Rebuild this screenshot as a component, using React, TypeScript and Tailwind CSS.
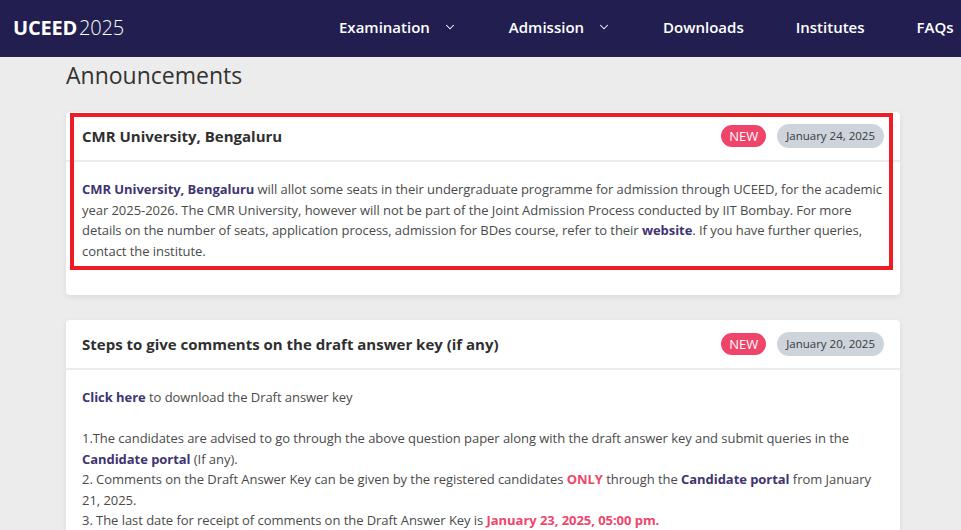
import { ChevronDown } from "lucide-react";

const font = { fontFamily: '"Open Sans", "Noto Sans", sans-serif' };

function NavItem({ label, dropdown }: { label: string; dropdown?: boolean }) {
  return (
    <div className="flex items-center gap-[13px] text-[15px] font-semibold text-white whitespace-nowrap">
      <span>{label}</span>
      {dropdown && <ChevronDown size={14} strokeWidth={1.75} />}
    </div>
  );
}

function Badges({ date }: { date: string }) {
  return (
    <div className="flex items-center gap-[11px]">
      <span className="h-[22px] px-[8px] rounded-full bg-[#f0456b] text-white text-[13px] leading-[22px]">NEW</span>
      <span className="h-[24px] px-[9px] rounded-full bg-[#cdd4dc] text-[#3a3a3a] text-[11.5px] leading-[24px]">{date}</span>
    </div>
  );
}

function Card({ title, date, children }: { title: string; date: string; children: React.ReactNode }) {
  return (
    <div className="bg-white rounded-[4px] shadow-[0_2px_6px_rgba(0,0,0,0.08)]">
      <div className="flex items-center justify-between h-[50px] px-[16px] border-b-2 border-[#ececec]">
        <h3 className="text-[15px] font-bold text-[#2f2f2f]">{title}</h3>
        <Badges date={date} />
      </div>
      <div className="px-[16px] pt-[17px] pb-[34px] text-[13px] tracking-[-0.05px] leading-[20.5px] text-[#4a4a4a]">
        {children}
      </div>
    </div>
  );
}

const B = ({ children }: { children: React.ReactNode }) => (
  <b className="font-bold text-[#3f3470]">{children}</b>
);
const P = ({ children }: { children: React.ReactNode }) => (
  <b className="font-bold text-[#f0456b]">{children}</b>
);

export default function App() {
  return (
    <div className="min-h-[530px] bg-[#ececec] overflow-hidden" style={font}>
      <nav className="h-[57px] bg-[#221f50] flex items-center pl-[13px] pb-[2px] relative">
        <div className="text-white text-[20px] tracking-[-0.2px]">
          <span className="font-bold">UCEED</span>
          <span className="font-light ml-[2px]">2025</span>
        </div>
        <div className="absolute left-[339px] top-0 h-full pb-[3px] flex items-center gap-[52px]">
          <NavItem label="Examination" dropdown />
          <NavItem label="Admission" dropdown />
          <NavItem label="Downloads" />
          <NavItem label="Institutes" />
          <NavItem label="FAQs" />
        </div>
      </nav>

      <main className="ml-[66px] w-[834px]">
        <h1 className="text-[23px] text-[#333] h-[36px] leading-[36px] mb-[19px]">Announcements</h1>

        <div className="relative">
          <Card title="CMR University, Bengaluru" date="January 24, 2025">
            <p>
              <B>CMR University, Bengaluru</B> will allot some seats in their undergraduate programme for admission
              through UCEED, for the academic year 2025-2026. The CMR University, however will not be part of the Joint
              Admission Process conducted by IIT Bombay. For more details on the number of seats, application process,
              admission for BDes course, refer to their <B>website</B>. If you have further queries, contact the
              institute.
            </p>
          </Card>
          <div className="absolute left-[4px] top-[1px] w-[823px] h-[157px] border-[4px] border-[#ee1c25] pointer-events-none" />
        </div>

        <div className="mt-[25px]">
          <Card title="Steps to give comments on the draft answer key (if any)" date="January 20, 2025">
            <p>
              <B>Click here</B> to download the Draft answer key
            </p>
            <br />
            <p>
              1.The candidates are advised to go through the above question paper along with the draft answer key and
              submit queries in the <B>Candidate portal</B> (If any).
              <br />
              2. Comments on the Draft Answer Key can be given by the registered candidates <P>ONLY</P> through the{" "}
              <B>Candidate portal</B> from January 21, 2025.
              <br />
              3. The last date for receipt of comments on the Draft Answer Key is <P>January 23, 2025, 05:00 pm.</P>
            </p>
          </Card>
        </div>
      </main>
    </div>
  );
}
